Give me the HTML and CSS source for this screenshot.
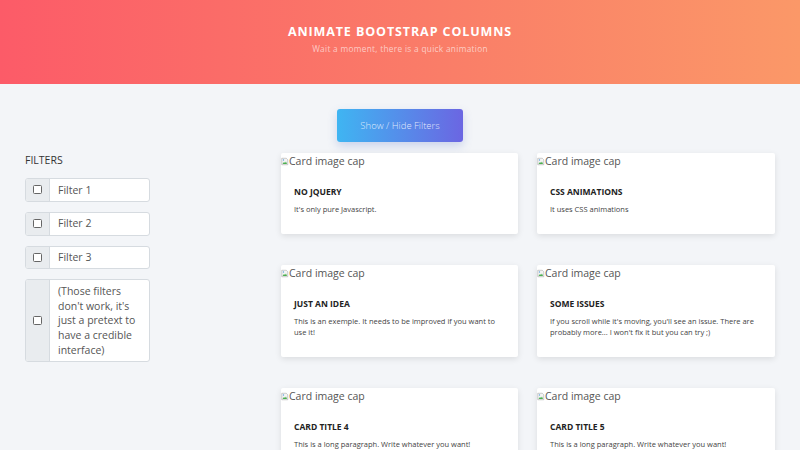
FILE: index.html
```html
<!DOCTYPE html>
<html lang="en">
<head>
  <meta charset="UTF-8">
  <title>Animate Bootstrap Columns</title>
  <link rel="stylesheet" href="styles.css">
</head>
<body>
  <!-- Top banner -->
  <header class="banner">
    <h1 class="banner-title">Animate Bootstrap Columns</h1>
    <p class="banner-sub">Wait a moment, there is a quick animation</p>
  </header>

  <div class="toolbar">
    <button class="btn-toggle" type="button">Show / Hide Filters</button>
  </div>

  <main class="page">
    <!-- Filters column -->
    <aside class="filters">
      <h2 class="filters-title">Filters</h2>
      <label class="input-group">
        <span class="addon"><span class="box"></span></span>
        <span class="field">Filter 1</span>
      </label>
      <label class="input-group">
        <span class="addon"><span class="box"></span></span>
        <span class="field">Filter 2</span>
      </label>
      <label class="input-group">
        <span class="addon"><span class="box"></span></span>
        <span class="field">Filter 3</span>
      </label>
      <label class="input-group">
        <span class="addon"><span class="box"></span></span>
        <span class="field">(Those filters don't work, it's just a pretext to have a credible interface)</span>
      </label>
    </aside>

    <!-- Cards -->
    <section class="cards">
      <div class="card">
        <div class="img-cap"><svg class="broken" viewBox="0 0 16 16"><path d="M1.5 1.5h9l3 3v10h-12z" fill="#f4f4f4" stroke="#9a9a9a"/><path d="M3 13l3-4 2 2 2-3 2 5z" fill="#4caf50"/><circle cx="5" cy="5" r="1.3" fill="#5aa0e0"/></svg>Card image cap</div>
        <div class="card-body">
          <h3 class="card-title">No jQuery</h3>
          <p class="card-text">It's only pure Javascript.</p>
        </div>
      </div>
      <div class="card">
        <div class="img-cap"><svg class="broken" viewBox="0 0 16 16"><path d="M1.5 1.5h9l3 3v10h-12z" fill="#f4f4f4" stroke="#9a9a9a"/><path d="M3 13l3-4 2 2 2-3 2 5z" fill="#4caf50"/><circle cx="5" cy="5" r="1.3" fill="#5aa0e0"/></svg>Card image cap</div>
        <div class="card-body">
          <h3 class="card-title">CSS Animations</h3>
          <p class="card-text">It uses CSS animations</p>
        </div>
      </div>
      <div class="card">
        <div class="img-cap"><svg class="broken" viewBox="0 0 16 16"><path d="M1.5 1.5h9l3 3v10h-12z" fill="#f4f4f4" stroke="#9a9a9a"/><path d="M3 13l3-4 2 2 2-3 2 5z" fill="#4caf50"/><circle cx="5" cy="5" r="1.3" fill="#5aa0e0"/></svg>Card image cap</div>
        <div class="card-body">
          <h3 class="card-title">Just an idea</h3>
          <p class="card-text">This is an exemple. It needs to be improved if you want to use it!</p>
        </div>
      </div>
      <div class="card">
        <div class="img-cap"><svg class="broken" viewBox="0 0 16 16"><path d="M1.5 1.5h9l3 3v10h-12z" fill="#f4f4f4" stroke="#9a9a9a"/><path d="M3 13l3-4 2 2 2-3 2 5z" fill="#4caf50"/><circle cx="5" cy="5" r="1.3" fill="#5aa0e0"/></svg>Card image cap</div>
        <div class="card-body">
          <h3 class="card-title">Some issues</h3>
          <p class="card-text">If you scroll while it's moving, you'll see an issue. There are probably more... I won't fix it but you can try ;)</p>
        </div>
      </div>
      <div class="card">
        <div class="img-cap"><svg class="broken" viewBox="0 0 16 16"><path d="M1.5 1.5h9l3 3v10h-12z" fill="#f4f4f4" stroke="#9a9a9a"/><path d="M3 13l3-4 2 2 2-3 2 5z" fill="#4caf50"/><circle cx="5" cy="5" r="1.3" fill="#5aa0e0"/></svg>Card image cap</div>
        <div class="card-body">
          <h3 class="card-title">Card title 4</h3>
          <p class="card-text">This is a long paragraph. Write whatever you want!</p>
        </div>
      </div>
      <div class="card">
        <div class="img-cap"><svg class="broken" viewBox="0 0 16 16"><path d="M1.5 1.5h9l3 3v10h-12z" fill="#f4f4f4" stroke="#9a9a9a"/><path d="M3 13l3-4 2 2 2-3 2 5z" fill="#4caf50"/><circle cx="5" cy="5" r="1.3" fill="#5aa0e0"/></svg>Card image cap</div>
        <div class="card-body">
          <h3 class="card-title">Card title 5</h3>
          <p class="card-text">This is a long paragraph. Write whatever you want!</p>
        </div>
      </div>
    </section>
  </main>
</body>
</html>
```

FILE: styles.css
```css
/* Base */
body {
  margin: 0;
  padding: 0;
  background: #f3f5f8;
  font-family: "Open Sans", "Noto Sans", sans-serif;
  color: #333;
  overflow: hidden;
}

/* Header banner */
.banner {
  height: 84px;
  box-sizing: border-box;
  padding-top: 24px;
  text-align: center;
  background: linear-gradient(90deg, #fc5b68, #fa7d68 55%, #fb9868);
}
.banner-title {
  margin: 0;
  font-size: 12.5px;
  font-weight: 700;
  letter-spacing: 0.9px;
  text-transform: uppercase;
  color: #fff;
  line-height: 16px;
}
.banner-sub {
  margin: 3px 0 0;
  font-size: 8.3px;
  letter-spacing: 0.3px;
  color: rgba(255, 255, 255, 0.62);
  line-height: 12px;
}

/* Toggle button */
.toolbar {
  display: flex;
  justify-content: center;
  padding-top: 25px;
}
.btn-toggle {
  width: 126px;
  height: 33px;
  border: 0;
  border-radius: 3px;
  background: linear-gradient(90deg, #3fb5f2, #6b66e2);
  color: rgba(255, 255, 255, 0.82);
  font-family: "Open Sans", sans-serif;
  font-size: 9.5px;
  font-weight: 300;
  box-shadow: 0 4px 10px rgba(80, 110, 200, 0.25);
}

/* Main layout */
.page {
  display: grid;
  grid-template-columns: 125px 1fr;
  column-gap: 131px;
  padding: 11px 25px 0 25px;
}

/* Filters */
.filters-title {
  margin: 0 0 11px;
  font-size: 10.5px;
  font-weight: 400;
  text-transform: uppercase;
  color: #333;
  line-height: 14px;
}
.input-group {
  display: flex;
  margin-bottom: 10px;
  border: 1px solid #d6dbe0;
  border-radius: 3px;
  background: #fff;
  overflow: hidden;
}
.addon {
  width: 23px;
  flex: none;
  display: flex;
  align-items: center;
  justify-content: center;
  background: #e9ecef;
  border-right: 1px solid #d6dbe0;
}
.box {
  width: 7px;
  height: 7px;
  border: 1px solid #666;
  border-radius: 1.5px;
  background: #fff;
}
.field {
  padding: 3.5px 6px 3.5px 8px;
  font-size: 10.5px;
  line-height: 14.8px;
  color: #555;
}

/* Cards */
.cards {
  display: grid;
  grid-template-columns: 237px 238px;
  column-gap: 19px;
  row-gap: 31px;
  align-items: start;
}
.card {
  background: #fff;
  border-radius: 2px;
  box-shadow: 0 2px 6px rgba(0, 0, 0, 0.1);
}
.img-cap {
  display: flex;
  align-items: center;
  height: 16px;
  font-size: 10.5px;
  color: #555;
}
.broken {
  width: 8px;
  height: 11px;
  margin-right: 0;
}
.card-body {
  padding: 17px 13px 19px;
}
.card-title {
  margin: 0 0 6px;
  font-size: 8.5px;
  font-weight: 700;
  text-transform: uppercase;
  color: #222;
  line-height: 12px;
}
.card-text {
  margin: 0;
  font-size: 7.5px;
  line-height: 11px;
  color: #444;
}
```
